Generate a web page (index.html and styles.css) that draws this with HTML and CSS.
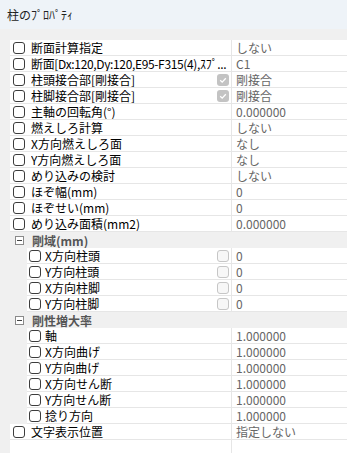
FILE: index.html
```html
<!DOCTYPE html>
<html lang="ja">
<head>
<meta charset="utf-8">
<link rel="stylesheet" href="styles.css">
</head>
<body>
<div class="panel">
  <div class="title">柱のﾌﾟﾛﾊﾟﾃｨ</div>
  <div class="band"></div>
  <div class="grid">
    <div class="row"><div class="ind"></div><div class="name"><span class="cb"></span><span class="lbl">断面計算指定</span></div><div class="val">しない</div></div>
    <div class="row"><div class="ind"></div><div class="name"><span class="cb"></span><span class="lbl tight">断面[Dx:120,Dy:120,E95-F315(4),ｽﾌﾟ...</span></div><div class="val">C1</div></div>
    <div class="row"><div class="ind"></div><div class="name"><span class="cb"></span><span class="lbl">柱頭接合部[剛接合]</span><span class="dcb checked"><svg viewBox="0 0 12 12" width="12" height="12"><path d="M3.2 6.2 L5.2 8.1 L8.8 4.2" fill="none" stroke="#fff" stroke-width="1.3"/></svg></span></div><div class="val">剛接合</div></div>
    <div class="row"><div class="ind"></div><div class="name"><span class="cb"></span><span class="lbl">柱脚接合部[剛接合]</span><span class="dcb checked"><svg viewBox="0 0 12 12" width="12" height="12"><path d="M3.2 6.2 L5.2 8.1 L8.8 4.2" fill="none" stroke="#fff" stroke-width="1.3"/></svg></span></div><div class="val">剛接合</div></div>
    <div class="row"><div class="ind"></div><div class="name"><span class="cb"></span><span class="lbl">主軸の回転角(&#xb0;)</span></div><div class="val">0.000000</div></div>
    <div class="row"><div class="ind"></div><div class="name"><span class="cb"></span><span class="lbl">燃えしろ計算</span></div><div class="val">しない</div></div>
    <div class="row"><div class="ind"></div><div class="name"><span class="cb"></span><span class="lbl">X方向燃えしろ面</span></div><div class="val">なし</div></div>
    <div class="row"><div class="ind"></div><div class="name"><span class="cb"></span><span class="lbl">Y方向燃えしろ面</span></div><div class="val">なし</div></div>
    <div class="row"><div class="ind"></div><div class="name"><span class="cb"></span><span class="lbl">めり込みの検討</span></div><div class="val">しない</div></div>
    <div class="row"><div class="ind"></div><div class="name"><span class="cb"></span><span class="lbl">ほぞ幅(mm)</span></div><div class="val">0</div></div>
    <div class="row"><div class="ind"></div><div class="name"><span class="cb"></span><span class="lbl">ほぞせい(mm)</span></div><div class="val">0</div></div>
    <div class="row"><div class="ind"></div><div class="name"><span class="cb"></span><span class="lbl">めり込み面積(mm2)</span></div><div class="val">0.000000</div></div>
    <div class="group"><span class="tog"></span><span class="glbl">剛域(mm)</span></div>
    <div class="row sub"><div class="ind"></div><div class="name"><span class="cb"></span><span class="lbl">X方向柱頭</span><span class="dcb"></span></div><div class="val">0</div></div>
    <div class="row sub"><div class="ind"></div><div class="name"><span class="cb"></span><span class="lbl">Y方向柱頭</span><span class="dcb"></span></div><div class="val">0</div></div>
    <div class="row sub"><div class="ind"></div><div class="name"><span class="cb"></span><span class="lbl">X方向柱脚</span><span class="dcb"></span></div><div class="val">0</div></div>
    <div class="row sub"><div class="ind"></div><div class="name"><span class="cb"></span><span class="lbl">Y方向柱脚</span><span class="dcb"></span></div><div class="val">0</div></div>
    <div class="group"><span class="tog"></span><span class="glbl">剛性増大率</span></div>
    <div class="row sub"><div class="ind"></div><div class="name"><span class="cb"></span><span class="lbl">軸</span></div><div class="val">1.000000</div></div>
    <div class="row sub"><div class="ind"></div><div class="name"><span class="cb"></span><span class="lbl">X方向曲げ</span></div><div class="val">1.000000</div></div>
    <div class="row sub"><div class="ind"></div><div class="name"><span class="cb"></span><span class="lbl">Y方向曲げ</span></div><div class="val">1.000000</div></div>
    <div class="row sub"><div class="ind"></div><div class="name"><span class="cb"></span><span class="lbl">X方向せん断</span></div><div class="val">1.000000</div></div>
    <div class="row sub"><div class="ind"></div><div class="name"><span class="cb"></span><span class="lbl">Y方向せん断</span></div><div class="val">1.000000</div></div>
    <div class="row sub"><div class="ind"></div><div class="name"><span class="cb"></span><span class="lbl">捻り方向</span></div><div class="val">1.000000</div></div>
    <div class="row"><div class="ind"></div><div class="name"><span class="cb"></span><span class="lbl">文字表示位置</span></div><div class="val">指定しない</div></div>
    <div class="row"><div class="ind"></div><div class="name"></div><div class="val"></div></div>
  </div>
</div>
</body>
</html>
```
FILE: styles.css
```css
html, body {
  margin: 0;
  padding: 0;
  background: #f0f0f0;
}
body {
  width: 347px;
  height: 453px;
  overflow: hidden;
  font-family: "Noto Sans CJK JP", "Noto Sans", sans-serif;
  font-size: 12px;
  color: #000;
}
.title {
  height: 29px;
  background: #eef3f8;
  color: #222;
  line-height: 29px;
  padding-left: 7px;
  font-size: 12px;
}
.band {
  height: 11px;
  background: #f0f0f0;
}
.grid {
  display: flex;
  flex-direction: column;
}
.row {
  display: flex;
  height: 16px;
}
.ind {
  width: 10px;
  flex: none;
  background: #f0f0f0;
}
.row.sub .ind {
  width: 27px;
}
.name {
  flex: 1;
  min-width: 0;
  display: flex;
  align-items: center;
  background: #fff;
  border-bottom: 1px solid #e6e6e6;
  padding-left: 3px;
  padding-right: 2px;
  gap: 6px;
}
.row.sub .name {
  padding-left: 2px;
  gap: 4px;
}
.lbl {
  flex: 1;
  min-width: 0;
  white-space: nowrap;
  overflow: hidden;
  line-height: 15px;
}
.lbl.tight {
  letter-spacing: -0.35px;
}
.val {
  width: 111px;
  flex: none;
  background: #fff;
  border-left: 1px solid #e6e6e6;
  border-bottom: 1px solid #e6e6e6;
  padding-left: 4px;
  color: #666;
  line-height: 15px;
  white-space: nowrap;
  overflow: hidden;
}
.cb {
  width: 10px;
  height: 10px;
  flex: none;
  border: 1px solid #3c3c3c;
  border-radius: 3px;
  background: #fff;
}
.dcb {
  width: 10px;
  height: 10px;
  flex: none;
  border: 1px solid #c6c6c6;
  border-radius: 3px;
  background: #f7f7f7;
  display: flex;
}
.dcb.checked {
  width: 12px;
  height: 12px;
  border: none;
  background: #c3c3c3;
}
.group {
  height: 16px;
  display: flex;
  align-items: center;
  background: #f0f0f0;
  padding-left: 15px;
  gap: 8px;
}
.tog {
  width: 7px;
  height: 7px;
  border: 1px solid #8a8a8a;
  background: #fff;
  position: relative;
  flex: none;
}
.tog::after {
  content: "";
  position: absolute;
  left: 1px;
  top: 3px;
  width: 5px;
  height: 1px;
  background: #444;
}
.glbl {
  font-weight: bold;
  color: #555;
  line-height: 15px;
}
```
